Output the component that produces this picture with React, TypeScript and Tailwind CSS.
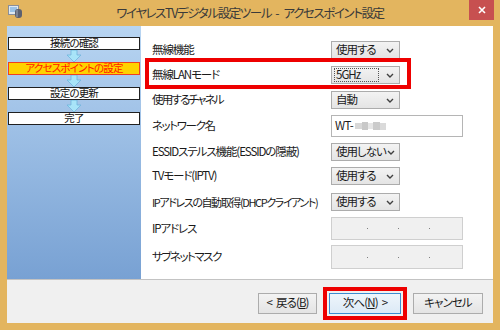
import React from 'react';

const FONT = "font-['Noto_Sans_CJK_JP','Noto_Sans',sans-serif] [font-feature-settings:'palt']";

const Chevron: React.FC = () => (
  <svg width="8" height="5" viewBox="0 0 8 5" className="shrink-0">
    <path d="M1 1 L4 4 L7 1" fill="none" stroke="#404040" strokeWidth="1.4" />
  </svg>
);

interface SelectProps {
  value: string;
  focused?: boolean;
}

const Select: React.FC<SelectProps> = ({ value, focused = false }) => (
  <div className="w-[69px] h-[18px] border border-[#acacac] bg-gradient-to-b from-[#f3f3f3] to-[#e4e4e4] flex items-center pl-[2px] pr-[5px]">
    <div
      className={`flex-1 h-[14px] flex items-center pl-[1px] text-[11.5px] tracking-[-1px] leading-none whitespace-nowrap text-[#1a1a1a] ${
        focused ? 'border border-dotted border-[#555] mr-[7px]' : 'border border-transparent'
      }`}
    >
      {value}
    </div>
    <Chevron />
  </div>
);

const IpBox: React.FC<{ height: string }> = ({ height }) => (
  <div className={`w-[132px] ${height} border border-[#cfcfcf] bg-[#f0f0f0] flex items-center pl-[35px] gap-[30px]`}>
    <span className="w-[1px] h-[1px] bg-[#808080]" />
    <span className="w-[1px] h-[1px] bg-[#808080]" />
    <span className="w-[1px] h-[1px] bg-[#808080]" />
  </div>
);

const Step: React.FC<{ label: string; active?: boolean }> = ({ label, active = false }) => (
  <div
    className={`h-[13px] mx-[1px] flex items-center justify-center text-[10.5px] tracking-[-0.8px] leading-none whitespace-nowrap ${
      active
        ? 'bg-[#ffd200] border border-[#f04020] text-[#ff1800]'
        : 'bg-white border border-[#202020] text-[#111]'
    }`}
  >
    {label}
  </div>
);

const StepArrow: React.FC = () => (
  <div className="h-[12px] flex justify-center">
    <svg width="16" height="12" viewBox="0 0 16 12">
      <path d="M5 0 H11 V5 H15 L8 12 L1 5 H5 Z" fill="#a8e4f8" stroke="#6fb4dc" strokeWidth="0.8" />
    </svg>
  </div>
);

const rows: { label: string; mt: string; track?: string; control: React.ReactNode }[] = [
  { label: '無線機能', mt: 'mt-0', control: <Select value="使用する" /> },
  { label: '無線LANモード', mt: 'mt-[7px]', control: <Select value="5GHz" focused /> },
  { label: '使用するチャネル', mt: 'mt-[7px]', track: 'tracking-[-1.8px]', control: <Select value="自動" /> },
  {
    label: 'ネットワーク名',
    mt: 'mt-[6px]',
    track: 'tracking-[-1.4px]',
    control: (
      <div className="w-[132px] h-[22px] border border-[#b5b5b5] bg-white flex items-center pl-[3px] text-[11.5px] tracking-[-0.6px] leading-none text-[#1a1a1a]">
        WT-
        <span className="ml-[2px] w-[7px] h-[6px] bg-[#d8d8d8]" />
        <span className="w-[6px] h-[8px] bg-[#c8c8c8]" />
        <span className="w-[5px] h-[6px] bg-[#e6e6e6]" />
        <span className="w-[7px] h-[8px] bg-[#cbcbcb]" />
        <span className="w-[6px] h-[7px] bg-[#dadada]" />
      </div>
    ),
  },
  { label: 'ESSIDステルス機能(ESSIDの隠蔽)', mt: 'mt-[6px]', control: <Select value="使用しない" /> },
  { label: 'TVモード(IPTV)', mt: 'mt-[6px]', control: <Select value="使用する" /> },
  {
    label: 'IPアドレスの自動取得(DHCPクライアント)',
    mt: 'mt-[8px]',
    track: 'text-[11px] tracking-[-1.4px]',
    control: <Select value="使用する" />,
  },
  { label: 'IPアドレス', mt: 'mt-[6px]', control: <IpBox height="h-[23px]" /> },
  { label: 'サブネットマスク', mt: 'mt-[5px]', track: 'tracking-[-1.5px]', control: <IpBox height="h-[24px]" /> },
];

const App: React.FC = () => {
  return (
    <div className={`w-[500px] h-[330px] bg-[#e3b55f] flex flex-col ${FONT}`}>
      {/* Title bar */}
      <div className="h-[26px] grid grid-cols-[40px_1fr_40px] items-start">
        <div className="pl-[8px] pt-[5px]">
          <svg width="15" height="14" viewBox="0 0 15 14">
            <rect x="0.5" y="0.5" width="10" height="9" fill="#dfe9f2" stroke="#8a8f99" />
            <rect x="2" y="2" width="7" height="5" fill="#9cc3e6" />
            <rect x="7" y="4" width="7" height="9" rx="3" fill="#5b6070" />
            <rect x="8" y="5" width="2" height="7" fill="#7d8494" />
          </svg>
        </div>
        <div className="h-[26px] flex items-center justify-center text-[12.5px] tracking-[-1.4px] text-[#3a3a3a] whitespace-nowrap">
          ワイヤレスTVデジタル設定ツール<span className="mx-[4px] tracking-normal">-</span>アクセスポイント設定
        </div>
        <div className="flex justify-end pr-[6px]">
          <div className="w-[25px] h-[20px] bg-[#c75050] flex items-center justify-center">
            <svg width="8" height="8" viewBox="0 0 8 8">
              <path d="M1 1 L7 7 M7 1 L1 7" stroke="white" strokeWidth="1.6" />
            </svg>
          </div>
        </div>
      </div>

      {/* Client area */}
      <div className="flex-1 mx-[7px] mb-[7px] flex flex-col">
        <div className="h-[253px] flex">
          {/* Step panel */}
          <div className="w-[134px] bg-gradient-to-b from-[#b8d5f2] to-[#78a1d3] pt-[11px] flex flex-col">
            <Step label="接続の確認" />
            <StepArrow />
            <Step label="アクセスポイントの設定" active />
            <StepArrow />
            <Step label="設定の更新" />
            <StepArrow />
            <Step label="完了" />
          </div>

          {/* Settings */}
          <div className="relative flex-1 bg-white pt-[15px] pl-[11px] flex flex-col text-[11.5px] tracking-[-1.1px] text-[#1a1a1a]">
            {rows.map((r) => (
              <div key={r.label} className={`flex items-center ${r.mt}`}>
                <div className={`w-[179px] leading-none whitespace-nowrap ${r.track ?? ''}`}>{r.label}</div>
                {r.control}
              </div>
            ))}
            {/* highlight */}
            <div className="absolute left-[4px] top-[32px] w-[266px] h-[31px] border-4 border-[#ee0000]" />
          </div>
        </div>

        {/* Footer */}
        <div className="flex-1 border-t border-[#c3c3c3] bg-[#f0f0f0] flex items-center justify-end pr-[10px] pt-[3px] gap-[6px] text-[11.5px] tracking-[-0.9px] text-[#1a1a1a]">
          <button className="w-[59px] h-[21px] border border-[#acacac] bg-gradient-to-b from-[#f3f3f3] to-[#e4e4e4] leading-none">
            &lt;<span className="ml-[4px]">戻る(<span className="underline">B</span>)</span>
          </button>
          <div className="border-4 border-[#ee0000] p-[2px]">
            <button className="w-[72px] h-[21px] border border-[#3c8cd0] bg-gradient-to-b from-[#eef5fb] to-[#dceaf6] leading-none">
              <span className="mr-[4px]">次へ(<span className="underline">N</span>)</span>&gt;
            </button>
          </div>
          <button className="w-[70px] h-[21px] border border-[#acacac] bg-gradient-to-b from-[#f3f3f3] to-[#e4e4e4] leading-none">
            キャンセル
          </button>
        </div>
      </div>
    </div>
  );
};

export default App;
